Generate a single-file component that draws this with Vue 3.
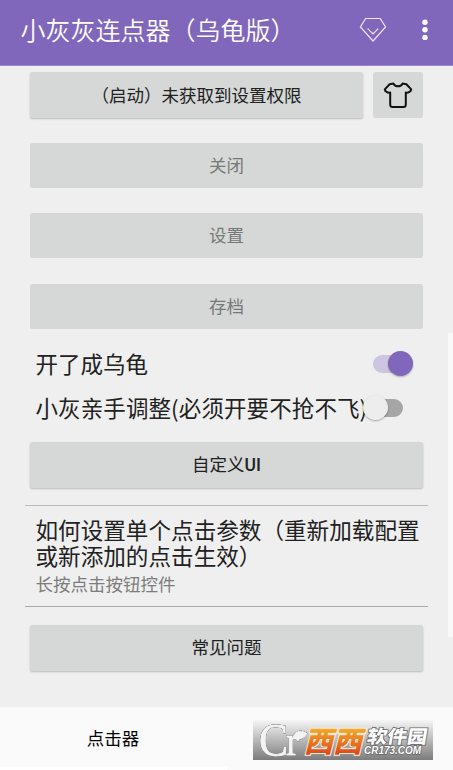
<script setup>
import { ref } from 'vue'

const disabledActions = ['关闭', '设置', '存档']
const turtle = ref(true)
const manual = ref(false)
</script>

<template>
  <div class="screen">
    <header class="bar">
      <h1 class="title">小灰灰连点器（乌龟版）</h1>
      <svg class="gem" viewBox="0 0 28 26" width="28" height="26">
        <path d="M6.6 1.5H21.2L26.6 10L14 24L1.4 10Z" />
        <path d="M8.6 11.6L14 17L19.2 11.6" />
      </svg>
      <svg class="more" viewBox="0 0 6 22" width="6" height="22">
        <circle cx="3" cy="3.2" r="2.7" />
        <circle cx="3" cy="10.8" r="2.7" />
        <circle cx="3" cy="18.4" r="2.7" />
      </svg>
    </header>

    <main class="content">
      <div class="top-row">
        <button class="btn raised start">（启动）未获取到设置权限</button>
        <button class="btn skin">
          <svg viewBox="0 0 30 28" width="30" height="28">
            <path d="M10.3 2.5C12.3 6.3 17.7 6.3 19.7 2.5L23.4 3.2L28.2 8.4C28 10.6 25.5 12 22.8 11.6V23.5Q22.8 26 20.5 26H9.5Q7.2 26 7.2 23.5V11.6C4.5 12 2 10.6 1.8 8.4L6.6 3.2Z" />
          </svg>
        </button>
      </div>

      <button v-for="label in disabledActions" :key="label" class="btn disabled">{{ label }}</button>

      <div class="switch-row first" @click="turtle = !turtle">
        <span>开了成乌龟</span>
        <i class="switch" :class="{ on: turtle }"></i>
      </div>
      <div class="switch-row" @click="manual = !manual">
        <span class="long">小灰亲手调整(必须开要不抢不飞)</span>
        <i class="switch" :class="{ on: manual }"></i>
      </div>

      <button class="btn raised custom">自定义<b>UI</b></button>

      <section class="help">
        <p class="question">如何设置单个点击参数（重新加载配置或新添加的点击生效）</p>
        <p class="hint">长按点击按钮控件</p>
      </section>

      <button class="btn raised faq">常见问题</button>
      <div class="scrollbar"></div>
    </main>

    <footer class="tabs">
      <span class="tab">点击器</span>
      <div class="indicator"></div>
      <svg class="mark" viewBox="0 0 180 40" width="180" height="40">
        <defs>
          <linearGradient id="plate" x1="0" y1="0" x2="0" y2="1">
            <stop offset="0" stop-color="#f6f6f6" />
            <stop offset="0.5" stop-color="#b9b9b9" />
            <stop offset="1" stop-color="#7c7c7c" />
          </linearGradient>
          <linearGradient id="orange" x1="0" y1="0" x2="0" y2="1">
            <stop offset="0.2" stop-color="#f5b52b" />
            <stop offset="0.85" stop-color="#de4a1c" />
          </linearGradient>
        </defs>
        <rect width="180" height="40" fill="url(#plate)" />
        <g class="letters">
          <text class="cr" x="6" y="35.5" textLength="29" lengthAdjust="spacingAndGlyphs">C</text>
          <text class="cr small" x="33" y="34.5" textLength="13" lengthAdjust="spacingAndGlyphs">r</text>
          <path d="M40 17C43 10 49 10 54 13.5C50 20 43 21 40 17Z" />
        </g>
        <g transform="translate(50.5 33) skewX(-14)">
          <text class="xi" x="0" y="-1.5" textLength="58" lengthAdjust="spacingAndGlyphs">西西</text>
        </g>
        <g transform="translate(113 24) skewX(-10)">
          <text class="soft" x="0" y="-1" textLength="60" lengthAdjust="spacingAndGlyphs">软件园</text>
        </g>
        <text class="url" x="111" y="34" textLength="57" lengthAdjust="spacingAndGlyphs">CR173.COM</text>
      </svg>
    </footer>
  </div>
</template>

<style>
body { margin: 0; background: #efefef; }
</style>

<style scoped>
.screen {
  width: 453px;
  height: 770px;
  overflow: hidden;
  display: flex;
  flex-direction: column;
  background: #efefef;
  color: #212121;
  font-family: "Noto Sans CJK SC", sans-serif;
}
.bar {
  box-sizing: border-box;
  height: 66px;
  flex: none;
  display: flex;
  align-items: center;
  padding: 0 25px 5px 20.5px;
  background: #8067bb;
  border-bottom: 1px solid #9a86c8;
  color: #fff;
}
.title {
  margin: 0;
  padding-bottom: 2px;
  flex: 1;
  font-size: 25px;
  line-height: 36px;
  font-weight: 350;
  white-space: nowrap;
}
.gem {
  margin-right: 35.5px;
  fill: none;
  stroke: #f1e6fa;
  stroke-width: 1.2;
}
.more { fill: #fff; }
.content {
  position: relative;
  flex: none;
  box-sizing: border-box;
  height: 641px;
  padding: 6px 30px 0;
  display: flex;
  flex-direction: column;
}
.btn {
  flex: none;
  display: flex;
  align-items: center;
  justify-content: center;
  padding: 1px 0 0;
  border: 0;
  border-radius: 2.5px;
  background: #d6d8d7;
  color: #212121;
  font-family: Roboto, "Noto Sans CJK SC", sans-serif;
  font-size: 17.5px;
  line-height: 26px;
  height: 45px;
}
.raised { box-shadow: 0 1px 2px rgba(0, 0, 0, 0.22); }
.btn b { font-weight: 500; }
.top-row {
  display: flex;
  gap: 10px;
  margin-bottom: 25px;
}
.top-row .btn { height: 46px; }
.start { flex: 1; }
.skin { box-sizing: border-box; width: 50px; padding: 0 1px 1px 0; }
.skin svg {
  flex: none;
  fill: none;
  stroke: #111;
  stroke-width: 2;
  stroke-linejoin: round;
}
.disabled {
  color: #777978;
  margin-bottom: 25.4px;
}
.switch-row {
  display: flex;
  align-items: center;
  height: 44px;
  padding: 0 10px 0 5.5px;
  font-size: 22.5px;
  line-height: 32px;
  white-space: nowrap;
}
.switch-row.first { margin-top: -12px; }
.switch-row span { flex: 1; min-width: 0; padding-bottom: 3px; }
.switch-row .long { letter-spacing: 0.1px; }
.switch {
  position: relative;
  flex: none;
  width: 30px;
  height: 18px;
  margin-right: 10px;
  border-radius: 9px;
  background: #a6a6a6;
}
.switch::after {
  content: "";
  position: absolute;
  left: -10px;
  top: -4px;
  width: 25px;
  height: 25px;
  border-radius: 50%;
  background: #ededed;
  box-shadow: 0 1px 2px rgba(0, 0, 0, 0.3);
}
.switch.on { background: #cdc5e1; }
.switch.on::after { left: 15px; background: #8067bb; }
.custom { margin-top: 11.8px; height: 45.6px; padding-top: 1px; }
.help {
  margin: 17px -5px 18px;
  box-sizing: border-box;
  height: 102px;
  padding: 11px 5px 0 10.5px;
  border-top: 1px solid #bcbcbc;
  border-bottom: 1px solid #a9a9a9;
}
.help p { margin: 0; }
.question { font-size: 22.6px; line-height: 26.5px; }
.hint { padding-top: 1px; font-size: 17.5px; line-height: 26px; color: #7c7c7c; }
.faq { height: 46px; padding-top: 0; }
.scrollbar {
  position: absolute;
  right: 0;
  top: 267px;
  width: 5px;
  height: 304px;
  background: #f9f9f9;
}
.tabs {
  position: relative;
  flex: 1;
  background: #fafafa;
  color: #000;
}
.tab {
  display: block;
  width: 226px;
  padding-top: 18px;
  text-align: center;
  font-size: 17.5px;
  line-height: 26px;
}
.indicator {
  position: absolute;
  left: 0;
  bottom: 0;
  width: 227px;
  height: 3px;
  background: #fff;
}
.mark {
  position: absolute;
  left: 253px;
  top: 13px;
}
.letters {
  fill: #f4f4f4;
  stroke: #f4f4f4;
  stroke-width: 0.9;
  filter: drop-shadow(0 0 0.6px #555) drop-shadow(0 0 0.5px #666);
}
.cr { font: 46px "Liberation Serif", serif; }
.cr.small { font-size: 42px; }
.xi {
  font: 900 29px "Noto Sans CJK SC", sans-serif;
  fill: url(#orange);
  stroke: #fff0d8;
  stroke-width: 2;
  paint-order: stroke;
}
.soft {
  font: 900 18px "Noto Sans CJK SC", sans-serif;
  fill: #fff;
  stroke: #666;
  stroke-width: 1.5;
  paint-order: stroke;
}
.url {
  font: italic bold 11px "Liberation Sans", sans-serif;
  fill: #fff;
  stroke: #666;
  stroke-width: 1.5;
  paint-order: stroke;
}
</style>
